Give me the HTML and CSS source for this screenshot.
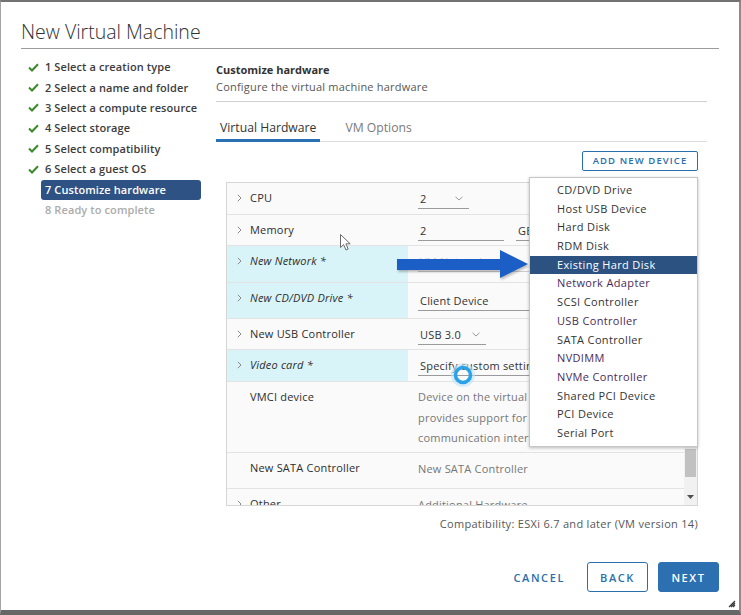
FILE: index.html
```html
<!DOCTYPE html>
<html lang="en">
<head>
<meta charset="utf-8">
<title>New Virtual Machine</title>
<link rel="stylesheet" href="styles.css">
</head>
<body>
<div class="dialog">
  <header class="dlg-head">
    <h1 class="dlg-title">New Virtual Machine</h1>
  </header>

  <div class="dlg-body">
    <nav class="steps">
      <div class="step done"><span class="check"><svg width="11" height="9" viewBox="0 0 11 9"><polyline points="1,4.5 4,7.5 10,1.2" fill="none" stroke="#3a8a2a" stroke-width="2"/></svg></span><span class="step-label">1 Select a creation type</span></div>
      <div class="step done"><span class="check"><svg width="11" height="9" viewBox="0 0 11 9"><polyline points="1,4.5 4,7.5 10,1.2" fill="none" stroke="#3a8a2a" stroke-width="2"/></svg></span><span class="step-label">2 Select a name and folder</span></div>
      <div class="step done"><span class="check"><svg width="11" height="9" viewBox="0 0 11 9"><polyline points="1,4.5 4,7.5 10,1.2" fill="none" stroke="#3a8a2a" stroke-width="2"/></svg></span><span class="step-label">3 Select a compute resource</span></div>
      <div class="step done"><span class="check"><svg width="11" height="9" viewBox="0 0 11 9"><polyline points="1,4.5 4,7.5 10,1.2" fill="none" stroke="#3a8a2a" stroke-width="2"/></svg></span><span class="step-label">4 Select storage</span></div>
      <div class="step done"><span class="check"><svg width="11" height="9" viewBox="0 0 11 9"><polyline points="1,4.5 4,7.5 10,1.2" fill="none" stroke="#3a8a2a" stroke-width="2"/></svg></span><span class="step-label">5 Select compatibility</span></div>
      <div class="step done"><span class="check"><svg width="11" height="9" viewBox="0 0 11 9"><polyline points="1,4.5 4,7.5 10,1.2" fill="none" stroke="#3a8a2a" stroke-width="2"/></svg></span><span class="step-label">6 Select a guest OS</span></div>
      <div class="step active"><span class="check"></span><span class="step-label">7 Customize hardware</span></div>
      <div class="step pending"><span class="check"></span><span class="step-label">8 Ready to complete</span></div>
    </nav>

    <main class="content">
      <div class="page-head">
        <div class="page-title">Customize hardware</div>
        <div class="page-sub">Configure the virtual machine hardware</div>
      </div>

      <div class="tabs">
        <div class="tab active">Virtual Hardware</div>
        <div class="tab">VM Options</div>
      </div>

      <div class="pane">
        <div class="toolbar">
          <div class="add-wrap">
            <button class="btn-sm">ADD NEW DEVICE</button>
            <ul class="menu">
              <li>CD/DVD Drive</li>
              <li>Host USB Device</li>
              <li>Hard Disk</li>
              <li>RDM Disk</li>
              <li class="sel">Existing Hard Disk</li>
              <li class="visited">Network Adapter</li>
              <li>SCSI Controller</li>
              <li class="visited">USB Controller</li>
              <li>SATA Controller</li>
              <li class="visited">NVDIMM</li>
              <li class="visited">NVMe Controller</li>
              <li>Shared PCI Device</li>
              <li>PCI Device</li>
              <li>Serial Port</li>
            </ul>
          </div>
        </div>

        <div class="hw-table">
          <div class="hw-rows">
            <div class="hw-row r32">
              <div class="hw-label"><span class="chev"><svg width="5" height="8" viewBox="0 0 5 8"><polyline points="0.8,0.8 4,4 0.8,7.2" fill="none" stroke="#8a8a8a" stroke-width="1"/></svg></span>CPU</div>
              <div class="hw-value"><span class="field w51">2<span class="caret"><svg width="8" height="5" viewBox="0 0 8 5"><polyline points="0.5,0.8 4,4 7.5,0.8" fill="none" stroke="#9a9a9a" stroke-width="1"/></svg></span></span></div>
            </div>
            <div class="hw-row r31">
              <div class="hw-label"><span class="chev"><svg width="5" height="8" viewBox="0 0 5 8"><polyline points="0.8,0.8 4,4 0.8,7.2" fill="none" stroke="#8a8a8a" stroke-width="1"/></svg></span>Memory</div>
              <div class="hw-value"><span class="field w86">2</span><span class="field w60 gap">GB</span></div>
            </div>
            <div class="hw-row r37 new">
              <div class="hw-label"><span class="chev"><svg width="5" height="8" viewBox="0 0 5 8"><polyline points="0.8,0.8 4,4 0.8,7.2" fill="none" stroke="#8a8a8a" stroke-width="1"/></svg></span>New Network *</div>
              <div class="hw-value"><span class="field w150 faint">VM Network</span></div>
            </div>
            <div class="hw-row r36 new">
              <div class="hw-label"><span class="chev"><svg width="5" height="8" viewBox="0 0 5 8"><polyline points="0.8,0.8 4,4 0.8,7.2" fill="none" stroke="#8a8a8a" stroke-width="1"/></svg></span>New CD/DVD Drive *</div>
              <div class="hw-value"><span class="field w150 low">Client Device</span></div>
            </div>
            <div class="hw-row r31">
              <div class="hw-label"><span class="chev"><svg width="5" height="8" viewBox="0 0 5 8"><polyline points="0.8,0.8 4,4 0.8,7.2" fill="none" stroke="#8a8a8a" stroke-width="1"/></svg></span>New USB Controller</div>
              <div class="hw-value"><span class="field w68">USB 3.0<span class="caret"><svg width="8" height="5" viewBox="0 0 8 5"><polyline points="0.5,0.8 4,4 7.5,0.8" fill="none" stroke="#9a9a9a" stroke-width="1"/></svg></span></span></div>
            </div>
            <div class="hw-row r32 new">
              <div class="hw-label"><span class="chev"><svg width="5" height="8" viewBox="0 0 5 8"><polyline points="0.8,0.8 4,4 0.8,7.2" fill="none" stroke="#8a8a8a" stroke-width="1"/></svg></span>Video card *</div>
              <div class="hw-value"><span class="field w150">Specify custom settings</span></div>
            </div>
            <div class="hw-row r71">
              <div class="hw-label"><span class="chev"></span>VMCI device</div>
              <div class="hw-value"><p class="desc">Device on the virtual machine PCI bus that<br>provides support for the virtual machine<br>communication interface</p></div>
            </div>
            <div class="hw-row r36">
              <div class="hw-label"><span class="chev"></span>New SATA Controller</div>
              <div class="hw-value"><span class="plain">New SATA Controller</span></div>
            </div>
            <div class="hw-row r36">
              <div class="hw-label"><span class="chev"><svg width="5" height="8" viewBox="0 0 5 8"><polyline points="0.8,0.8 4,4 0.8,7.2" fill="none" stroke="#8a8a8a" stroke-width="1"/></svg></span>Other</div>
              <div class="hw-value"><span class="plain">Additional Hardware</span></div>
            </div>
          </div>
          <div class="scrollbar">
            <div class="sb-track"><div class="sb-thumb"></div></div>
            <div class="sb-arrow"><svg width="7" height="4" viewBox="0 0 7 4"><polygon points="0,0 7,0 3.5,4" fill="#505050"/></svg></div>
          </div>
        </div>

        <div class="compat">Compatibility: ESXi 6.7 and later (VM version 14)</div>
      </div>
    </main>
  </div>

  <footer class="dlg-foot">
    <button class="btn flat">CANCEL</button>
    <button class="btn outline">BACK</button>
    <button class="btn primary">NEXT</button>
  </footer>

  <svg class="ov-arrow" width="134" height="32" viewBox="0 0 134 32">
    <polygon points="0,10 103,10 103,1 131,15 103,29 103,21 0,21" fill="#1b5fc6"/>
  </svg>
  <svg class="ov-cursor" width="12" height="18" viewBox="0 0 12 18">
    <path d="M0.5,0.5 L0.5,13.5 L3.6,10.6 L6,16 L8.2,15 L5.9,9.8 L10.2,9.8 Z" fill="#ffffff" stroke="#6a6a6a" stroke-width="1" stroke-linejoin="round"/>
  </svg>
  <svg class="ov-ring" width="24" height="24" viewBox="0 0 24 24">
    <circle cx="12" cy="12" r="9" fill="none" stroke="#bfe3f7" stroke-width="6" opacity="0.6"/>
    <circle cx="12" cy="12" r="7.5" fill="none" stroke="#2aa2e8" stroke-width="3.5"/>
  </svg>
  <svg class="ov-grip" width="8" height="8" viewBox="0 0 8 8">
    <path d="M7,1 L1,7 M7,3 L3,7 M7,5 L5,7" stroke="#3a3a3a" stroke-width="1.2"/>
  </svg>
</div>
</body>
</html>
```

FILE: styles.css
```css
* { box-sizing: border-box; }

html, body {
  margin: 0;
  padding: 0;
  background: #ffffff;
}

body {
  font-family: "Open Sans", "Liberation Sans", sans-serif;
  color: #333333;
  font-size: 11px;
  letter-spacing: 0.2px;
}

.dialog {
  position: relative;
  width: 741px;
  height: 615px;
  background: #ffffff;
  border-top: 2px solid #737373;
  border-left: 1px solid #a4a4a4;
  border-right: 2px solid #8c8c8c;
  border-bottom: 5px solid #666666;
  display: flex;
  flex-direction: column;
  overflow: hidden;
}

/* Header */
.dlg-head {
  margin: 0 20px;
  padding: 18px 0 4px;
  border-bottom: 1px solid #9c9c9c;
}

.dlg-title {
  margin: 0;
  font-size: 19.5px;
  line-height: 24px;
  font-weight: 300;
  letter-spacing: 0;
  color: #313131;
}

/* Body */
.dlg-body {
  display: flex;
  flex: 1;
  min-height: 0;
}

.steps {
  width: 215px;
  flex: none;
  padding: 8px 0 0 27px;
}

.step {
  display: flex;
  align-items: center;
  height: 20.4px;
}

.check {
  width: 13px;
  flex: none;
  display: flex;
  align-items: center;
}

.step-label {
  width: 160px;
  height: 20px;
  line-height: 20px;
  padding-left: 4px;
  font-size: 11px;
  font-weight: 600;
  letter-spacing: 0.1px;
  color: #3c3c3c;
  border-radius: 3px;
  white-space: nowrap;
}

.step.active .step-label {
  background: #2e5283;
  color: #ffffff;
}

.step.pending .step-label {
  color: #ababab;
}

/* Content */
.content {
  width: 491px;
  flex: none;
  display: flex;
  flex-direction: column;
}

.page-head {
  padding: 13px 0 6px;
  border-bottom: 1px solid #cfcfcf;
}

.page-title {
  font-weight: 700;
  line-height: 16px;
  letter-spacing: 0;
  color: #333333;
}

.page-sub {
  line-height: 16px;
  margin-top: 1px;
  color: #575757;
}

.tabs {
  display: flex;
  height: 40px;
  border-bottom: 1px solid #dddddd;
}

.tab {
  height: 40px;
  margin-bottom: -1px;
  padding: 17px 4px 0;
  font-size: 12.2px;
  line-height: 18px;
  letter-spacing: 0;
  color: #7a7a7a;
  border-bottom: 3px solid transparent;
  margin-right: 21px;
}

.tab.active {
  color: #333333;
  border-bottom-color: #2a70b5;
}

.pane {
  padding: 0 9px 0 10px;
  display: flex;
  flex-direction: column;
}

.toolbar {
  display: flex;
  justify-content: flex-end;
  margin-top: 9px;
}

.add-wrap {
  position: relative;
}

.btn-sm {
  display: block;
  height: 20px;
  width: 116px;
  padding: 0;
  border: 1px solid #2a6fab;
  border-radius: 2px;
  background: #ffffff;
  color: #2a6fab;
  font-family: inherit;
  font-size: 9.5px;
  font-weight: 600;
  letter-spacing: 1.1px;
  line-height: 18px;
}

.menu {
  position: absolute;
  top: 26px;
  right: 0;
  width: 169px;
  margin: 0;
  padding: 3px 0 3px;
  list-style: none;
  background: #ffffff;
  border: 1px solid #c6c6c6;
  box-shadow: 0 1px 3px rgba(0, 0, 0, 0.25);
  z-index: 5;
}

.menu li {
  height: 18.7px;
  line-height: 18.7px;
  padding-left: 27px;
  color: #333333;
  letter-spacing: 0.35px;
  white-space: nowrap;
}

.menu li.visited {
  color: #4a2c5a;
}

.menu li.sel {
  background: #2c5282;
  color: #ffffff;
}

/* Hardware table */
.hw-table {
  margin-top: 11px;
  height: 324px;
  border: 1px solid #d6d6d6;
  display: flex;
  background: #fafafa;
}

.hw-rows {
  flex: 1;
  min-width: 0;
  overflow: hidden;
}

.hw-row {
  display: flex;
  border-bottom: 1px solid #e3e3e3;
}

.r31 { height: 31px; }
.r32 { height: 32px; }
.r36 { height: 36px; }
.r37 { height: 37px; }
.r71 { height: 71px; }

.hw-label {
  width: 181px;
  flex: none;
  display: flex;
  align-items: flex-start;
  padding: 7px 0 0 10px;
  line-height: 15px;
  color: #2e2e2e;
}

.hw-row.new .hw-label {
  background: #d9f4f8;
  font-style: italic;
}

.chev {
  width: 13px;
  flex: none;
  display: flex;
  align-items: center;
  height: 15px;
}

.hw-value {
  flex: 1;
  min-width: 0;
  padding: 0 0 0 10px;
  display: flex;
  align-items: flex-start;
  white-space: nowrap;
  overflow: hidden;
}

.field {
  display: flex;
  align-items: center;
  flex: none;
  padding: 8px 2px 2px;
  line-height: 15px;
  border-bottom: 1px solid #9a9a9a;
  color: #333333;
}

.field.low {
  padding-top: 10px;
  padding-bottom: 2px;
}

.field.gap { margin-left: 12px; }
.w51 { width: 51px; }
.w60 { width: 60px; }
.w68 { width: 68px; }
.w86 { width: 86px; }
.w150 { width: 150px; }

.field.faint {
  color: #c8c8c8;
  border-bottom-color: #cccccc;
}

.caret {
  margin-left: auto;
  margin-right: 4px;
  display: flex;
  align-items: center;
}

.desc {
  margin: 0;
  padding-top: 5px;
  line-height: 20.5px;
  color: #777777;
}

.plain {
  padding-top: 8px;
  line-height: 15px;
  color: #777777;
}

.scrollbar {
  width: 13px;
  flex: none;
  background: #f1f1f1;
  display: flex;
  flex-direction: column;
}

.sb-track {
  flex: 1;
  padding: 266px 1px 0;
}

.sb-thumb {
  height: 28px;
  background: #c1c1c1;
}

.sb-arrow {
  height: 17px;
  display: flex;
  align-items: center;
  justify-content: center;
}

.compat {
  margin-top: 10px;
  text-align: right;
  line-height: 16px;
  letter-spacing: 0.3px;
  color: #575757;
}

/* Footer */
.dlg-foot {
  margin-top: auto;
  display: flex;
  justify-content: flex-end;
  align-items: center;
  gap: 10px;
  padding: 0 20px 18px;
}

.btn {
  height: 30px;
  font-family: inherit;
  font-size: 11px;
  font-weight: 600;
  letter-spacing: 1.6px;
  border-radius: 3px;
  padding: 0;
  width: 61px;
}

.btn.flat {
  background: transparent;
  border: 0;
  color: #2a6fab;
  width: auto;
  padding: 0 12px 0 0;
}

.btn.outline {
  background: #ffffff;
  border: 1px solid #2a6fab;
  color: #2a6fab;
}

.btn.primary {
  background: #2c70b2;
  border: 1px solid #2c70b2;
  color: #ffffff;
}

/* Overlays */
.ov-arrow {
  position: absolute;
  left: 396px;
  top: 247px;
  filter: drop-shadow(1px 2px 1px rgba(0, 0, 0, 0.25));
  z-index: 10;
}

.ov-cursor {
  position: absolute;
  left: 339px;
  top: 232px;
  z-index: 10;
}

.ov-ring {
  position: absolute;
  left: 450px;
  top: 361px;
  z-index: 10;
}

.ov-grip {
  position: absolute;
  right: 3px;
  bottom: 2px;
}
```
